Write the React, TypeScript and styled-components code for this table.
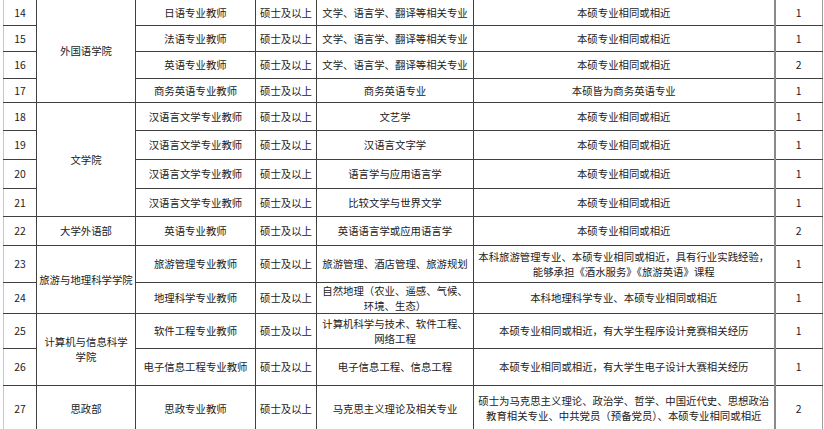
import React from 'react'
import styled, { createGlobalStyle } from 'styled-components'

const GlobalStyle = createGlobalStyle`
  html, body {
    margin: 0;
    padding: 0;
    background: #ffffff;
  }
  body {
    overflow: hidden;
  }
`

const Sheet = styled.div`
  width: 824px;
  height: 429px;
  overflow: hidden;
  padding-left: 3px;
  box-sizing: border-box;
  font-family: 'Noto Sans CJK SC', 'Noto Sans', sans-serif;
  font-size: 10.4px;
  color: #222222;
`

const Grid = styled.table`
  border-collapse: collapse;
  table-layout: fixed;
  width: 819px;

  tr:first-child td {
    border-top: none;
  }
`

const Row = styled.tr<{ $h: number }>`
  height: ${({ $h }) => $h}px;
`

const Cell = styled.td`
  border: 1px solid #404040;
  padding: 0;
  text-align: center;
  vertical-align: middle;
  line-height: 15px;
  white-space: pre;
  overflow: hidden;
`

const NoCell = styled(Cell)`
  border-left: 1px solid #c3cad4;
`

const CountCell = styled(Cell)`
  border-left: 2px solid #8a8a8a;
  border-right: 1px solid #9c9c9c;
`

interface Post {
  no: number
  college?: { name: string; span: number }
  post: string
  major: string
  req: string
  count: number
  h: number
}

const same = '本硕专业相同或相近'
const lang = '文学、语言学、翻译等相关专业'

const posts: Post[] = [
  { no: 14, college: { name: '外国语学院', span: 4 }, post: '日语专业教师', major: lang, req: same, count: 1, h: 25 },
  { no: 15, post: '法语专业教师', major: lang, req: same, count: 1, h: 26 },
  { no: 16, post: '英语专业教师', major: lang, req: same, count: 2, h: 27 },
  { no: 17, post: '商务英语专业教师', major: '商务英语专业', req: '本硕皆为商务英语专业', count: 1, h: 24 },
  { no: 18, college: { name: '文学院', span: 4 }, post: '汉语言文学专业教师', major: '文艺学', req: same, count: 1, h: 28 },
  { no: 19, post: '汉语言文学专业教师', major: '汉语言文字学', req: same, count: 1, h: 29 },
  { no: 20, post: '汉语言文学专业教师', major: '语言学与应用语言学', req: same, count: 1, h: 29 },
  { no: 21, post: '汉语言文学专业教师', major: '比较文学与世界文学', req: same, count: 1, h: 28 },
  { no: 22, college: { name: '大学外语部', span: 1 }, post: '英语专业教师', major: '英语语言学或应用语言学', req: same, count: 2, h: 29 },
  {
    no: 23,
    college: { name: '旅游与地理科学学院', span: 2 },
    post: '旅游管理专业教师',
    major: '旅游管理、酒店管理、旅游规划',
    req: '本科旅游管理专业、本硕专业相同或相近，具有行业实践经验，\n能够承担《酒水服务》《旅游英语》课程',
    count: 1,
    h: 37,
  },
  {
    no: 24,
    post: '地理科学专业教师',
    major: '自然地理（农业、遥感、气候、\n环境、生态）',
    req: '本科地理科学专业、本硕专业相同或相近',
    count: 1,
    h: 27,
  },
  {
    no: 25,
    college: { name: '计算机与信息科学\n学院', span: 2 },
    post: '软件工程专业教师',
    major: '计算机科学与技术、软件工程、\n网络工程',
    req: '本硕专业相同或相近，有大学生程序设计竞赛相关经历',
    count: 1,
    h: 35,
  },
  {
    no: 26,
    post: '电子信息工程专业教师',
    major: '电子信息工程、信息工程',
    req: '本硕专业相同或相近，有大学生电子设计大赛相关经历',
    count: 1,
    h: 37,
  },
  {
    no: 27,
    college: { name: '思政部', span: 1 },
    post: '思政专业教师',
    major: '马克思主义理论及相关专业',
    req: '硕士为马克思主义理论、政治学、哲学、中国近代史、思想政治\n教育相关专业、中共党员（预备党员）、本硕专业相同或相近',
    count: 2,
    h: 46,
  },
]

const widths = [33, 99, 120, 61, 157, 301, 48]

export default function App() {
  return (
    <>
      <GlobalStyle />
      <Sheet>
        <Grid>
          <colgroup>
            {widths.map((w, i) => (
              <col key={i} style={{ width: w }} />
            ))}
          </colgroup>
          <tbody>
            {posts.map((p) => (
              <Row key={p.no} $h={p.h}>
                <NoCell>{p.no}</NoCell>
                {p.college && <Cell rowSpan={p.college.span}>{p.college.name}</Cell>}
                <Cell>{p.post}</Cell>
                <Cell>硕士及以上</Cell>
                <Cell>{p.major}</Cell>
                <Cell>{p.req}</Cell>
                <CountCell>{p.count}</CountCell>
              </Row>
            ))}
            <Row $h={20}>
              <NoCell />
              <Cell />
              <Cell />
              <Cell />
              <Cell />
              <Cell />
              <CountCell />
            </Row>
          </tbody>
        </Grid>
      </Sheet>
    </>
  )
}
